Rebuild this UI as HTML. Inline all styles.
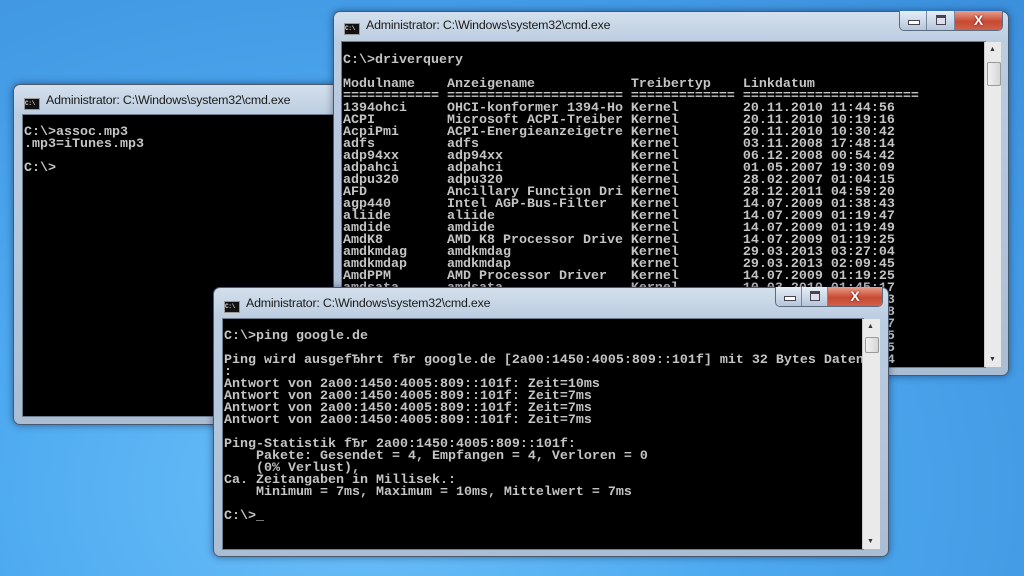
<!DOCTYPE html>
<html><head><meta charset="utf-8">
<style>
html,body{margin:0;padding:0}
body{width:1024px;height:576px;position:relative;overflow:hidden;
background:radial-gradient(ellipse at 35% 85%,#6cc0f8 0%,#4eaaf0 40%,#3b8fdc 100%);
font-family:"Liberation Sans",sans-serif}
.win{position:absolute;border:1px solid #4a5a6e;border-radius:7px;
background:linear-gradient(#d3dfec 0px,#bccde0 30px,#aabdd3 100%);
box-shadow:0 0 8px rgba(0,0,40,.45)}
.title{position:absolute;left:10px;top:6px;font-size:12.4px;color:#1a1a1a;white-space:nowrap;letter-spacing:-.2px}
.ic{display:inline-block;width:14px;height:10px;background:#111;border:1px solid #999;vertical-align:-1px;margin-right:6px;font:bold 6px "Liberation Mono";color:#ddd;line-height:10px;text-align:left}
.con{position:absolute;background:#000;border:1px solid #6d7d90}
pre{margin:0;position:absolute;font-family:"Liberation Mono",monospace;font-weight:bold;font-size:13.33px;line-height:12px;color:#c4c4c4;white-space:pre}
.sb{position:absolute;background:#eaeaea;border-left:1px solid #ccc}
.thumb{position:absolute;left:2px;width:12px;height:22px;background:linear-gradient(90deg,#f2f2f2,#d6d6d6);border:1px solid #9a9a9a;border-radius:2px}
.arr{position:absolute;left:4px;font-size:7px;color:#333}
.btns{position:absolute;top:-1px;height:19px;display:flex;border:1px solid #5b6b80;border-top:none;border-radius:0 0 5px 5px;overflow:hidden}
.b{height:19px;background:linear-gradient(#e6eef7,#b5c6da);border-right:1px solid #7486a0;position:relative}
.b.x{background:linear-gradient(#e8a08e,#c84a32 55%,#d0604a);border-right:none}
.b.m::after{content:"";position:absolute;left:50%;top:9px;width:10px;height:3px;margin-left:-5px;background:#fff;border:1px solid #445}
.b.r::after{content:"";position:absolute;left:50%;top:4px;width:8px;height:6px;margin-left:-5px;border:1px solid #445;border-top-width:3px;background:#dde}
.b.x::after{content:"X";position:absolute;left:0;right:0;top:1px;text-align:center;color:#fff;font:bold 14px "Liberation Sans";text-shadow:0 0 2px #600}
</style></head><body>

<div class="win" style="left:13px;top:84px;width:330px;height:339px">
 <div class="title" style="top:8px"><span class="ic">C:\</span>Administrator: C:\Windows\system32\cmd.exe</div>
 <div class="con" style="left:8px;top:29px;width:330px;height:301px">
  <pre style="left:1px;top:12px">C:\&gt;assoc.mp3
.mp3=iTunes.mp3

C:\&gt;</pre>
 </div>
</div>

<div class="win" style="left:333px;top:11px;width:674px;height:363px">
 <div class="title"><span class="ic">C:\</span>Administrator: C:\Windows\system32\cmd.exe</div>
 <div class="btns" style="left:565px"><div class="b m" style="width:26px"></div><div class="b r" style="width:27px"></div><div class="b x" style="width:47px"></div></div>
 <div class="con" style="left:7px;top:29px;width:643px;height:325px;overflow:hidden">
  <pre style="left:1px;top:13px">C:\&gt;driverquery

Modulname    Anzeigename            Treibertyp    Linkdatum
============ ====================== ============= ======================
1394ohci     OHCI-konformer 1394-Ho Kernel        20.11.2010 11:44:56
ACPI         Microsoft ACPI-Treiber Kernel        20.11.2010 10:19:16
AcpiPmi      ACPI-Energieanzeigetre Kernel        20.11.2010 10:30:42
adfs         adfs                   Kernel        03.11.2008 17:48:14
adp94xx      adp94xx                Kernel        06.12.2008 00:54:42
adpahci      adpahci                Kernel        01.05.2007 19:30:09
adpu320      adpu320                Kernel        28.02.2007 01:04:15
AFD          Ancillary Function Dri Kernel        28.12.2011 04:59:20
agp440       Intel AGP-Bus-Filter   Kernel        14.07.2009 01:38:43
aliide       aliide                 Kernel        14.07.2009 01:19:47
amdide       amdide                 Kernel        14.07.2009 01:19:49
AmdK8        AMD K8 Processor Drive Kernel        14.07.2009 01:19:25
amdkmdag     amdkmdag               Kernel        29.03.2013 03:27:04
amdkmdap     amdkmdap               Kernel        29.03.2013 02:09:45
AmdPPM       AMD Processor Driver   Kernel        14.07.2009 01:19:25
amdsata      amdsata                Kernel        10.03.2010 01:45:17
amdsbs       amdsbs                 Kernel        20.03.2009 01:38:33
amdxata      amdxata                Kernel        19.03.2010 01:18:18
AppID        AppID Driver           Kernel        20.11.2010 10:53:27
arc          arc                    Kernel        24.05.2007 22:52:35
arcsas       arcsas                 Kernel        14.01.2008 23:55:55
AsyncMac     RAS Asynchronous Media Kernel        14.07.2009 02:10:34</pre>
 </div>
 <div class="sb" style="left:650px;top:30px;width:16px;height:325px">
  <div class="arr" style="top:4px">▲</div><div class="thumb" style="top:20px"></div><div class="arr" style="bottom:4px">▼</div>
 </div>
</div>

<div class="win" style="left:213px;top:287px;width:674px;height:268px">
 <div class="title" style="top:8px"><span class="ic">C:\</span>Administrator: C:\Windows\system32\cmd.exe</div>
 <div class="btns" style="left:561px"><div class="b m" style="width:25px"></div><div class="b r" style="width:25px"></div><div class="b x" style="width:54px"></div></div>
 <div class="con" style="left:8px;top:30px;width:640px;height:230px;overflow:hidden">
  <pre style="left:1px;top:12px">C:\&gt;ping google.de

Ping wird ausgefЂhrt fЂr google.de [2a00:1450:4005:809::101f] mit 32 Bytes Daten
:
Antwort von 2a00:1450:4005:809::101f: Zeit=10ms
Antwort von 2a00:1450:4005:809::101f: Zeit=7ms
Antwort von 2a00:1450:4005:809::101f: Zeit=7ms
Antwort von 2a00:1450:4005:809::101f: Zeit=7ms

Ping-Statistik fЂr 2a00:1450:4005:809::101f:
    Pakete: Gesendet = 4, Empfangen = 4, Verloren = 0
    (0% Verlust),
Ca. Zeitangaben in Millisek.:
    Minimum = 7ms, Maximum = 10ms, Mittelwert = 7ms

C:\&gt;_</pre>
 </div>
 <div class="sb" style="left:648px;top:31px;width:17px;height:230px">
  <div class="arr" style="top:4px">▲</div><div class="thumb" style="top:18px;height:14px"></div><div class="arr" style="bottom:4px">▼</div>
 </div>
</div>
</body></html>
